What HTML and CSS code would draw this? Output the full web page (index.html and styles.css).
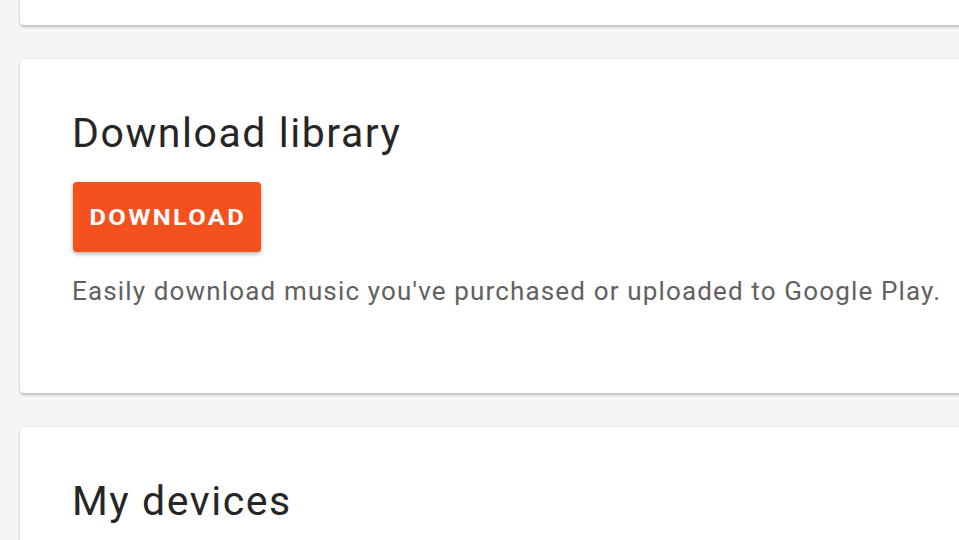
FILE: index.html
```html
<!DOCTYPE html>
<html lang="en">
<head>
<meta charset="utf-8">
<title>Settings</title>
<link rel="stylesheet" href="styles.css">
</head>
<body>
<main class="page">
  <section class="card card--top"></section>
  <section class="card card--download">
    <h2 class="card__title">Download library</h2>
    <button class="btn-download" type="button"><span class="btn-download__label">DOWNLOAD</span></button>
    <p class="card__text">Easily download music you've purchased or uploaded to Google Play.</p>
  </section>
  <section class="card card--devices">
    <h2 class="card__title">My devices</h2>
  </section>
</main>
</body>
</html>
```
FILE: styles.css
```css
html, body {
  margin: 0;
  height: 100%;
  overflow: hidden;
}
body {
  background: #f5f5f5;
  font-family: Roboto, "Noto Sans", sans-serif;
}
.page {
  display: flex;
  flex-direction: column;
  gap: 34px;
  width: 1100px;
  margin-top: -35px;
  padding-left: 20px;
}
.card {
  background: #fff;
  border-radius: 4px;
  box-shadow: 0 2px 3px rgba(0, 0, 0, 0.22), 0 0 2px rgba(0, 0, 0, 0.08);
}
.card--top {
  height: 60px;
}
.card--download {
  padding: 50px 52px 83px;
}
.card--devices {
  padding: 50px 52px 200px;
}
.card__title {
  margin: 0;
  font-size: 41px;
  line-height: 1.2;
  font-weight: 400;
  letter-spacing: 1.55px;
  color: #262626;
}
.btn-download {
  display: flex;
  align-items: center;
  justify-content: center;
  width: 188px;
  height: 70px;
  margin-top: 24px;
  margin-left: 1px;
  padding: 0;
  border: 0;
  border-radius: 4px;
  background: #f4511e;
  color: #fff;
  font-family: Roboto, sans-serif;
  font-size: 22px;
  font-weight: 700;
  box-shadow: 0 2px 4px rgba(0, 0, 0, 0.3);
}
.btn-download__label {
  display: inline-block;
  letter-spacing: 2px;
  margin-right: -2px;
  transform: scaleX(1.155);
}
.card__text {
  margin: 21px 0 0;
  font-size: 26px;
  line-height: 1.4;
  letter-spacing: 1.15px;
  color: #616161;
}
```
